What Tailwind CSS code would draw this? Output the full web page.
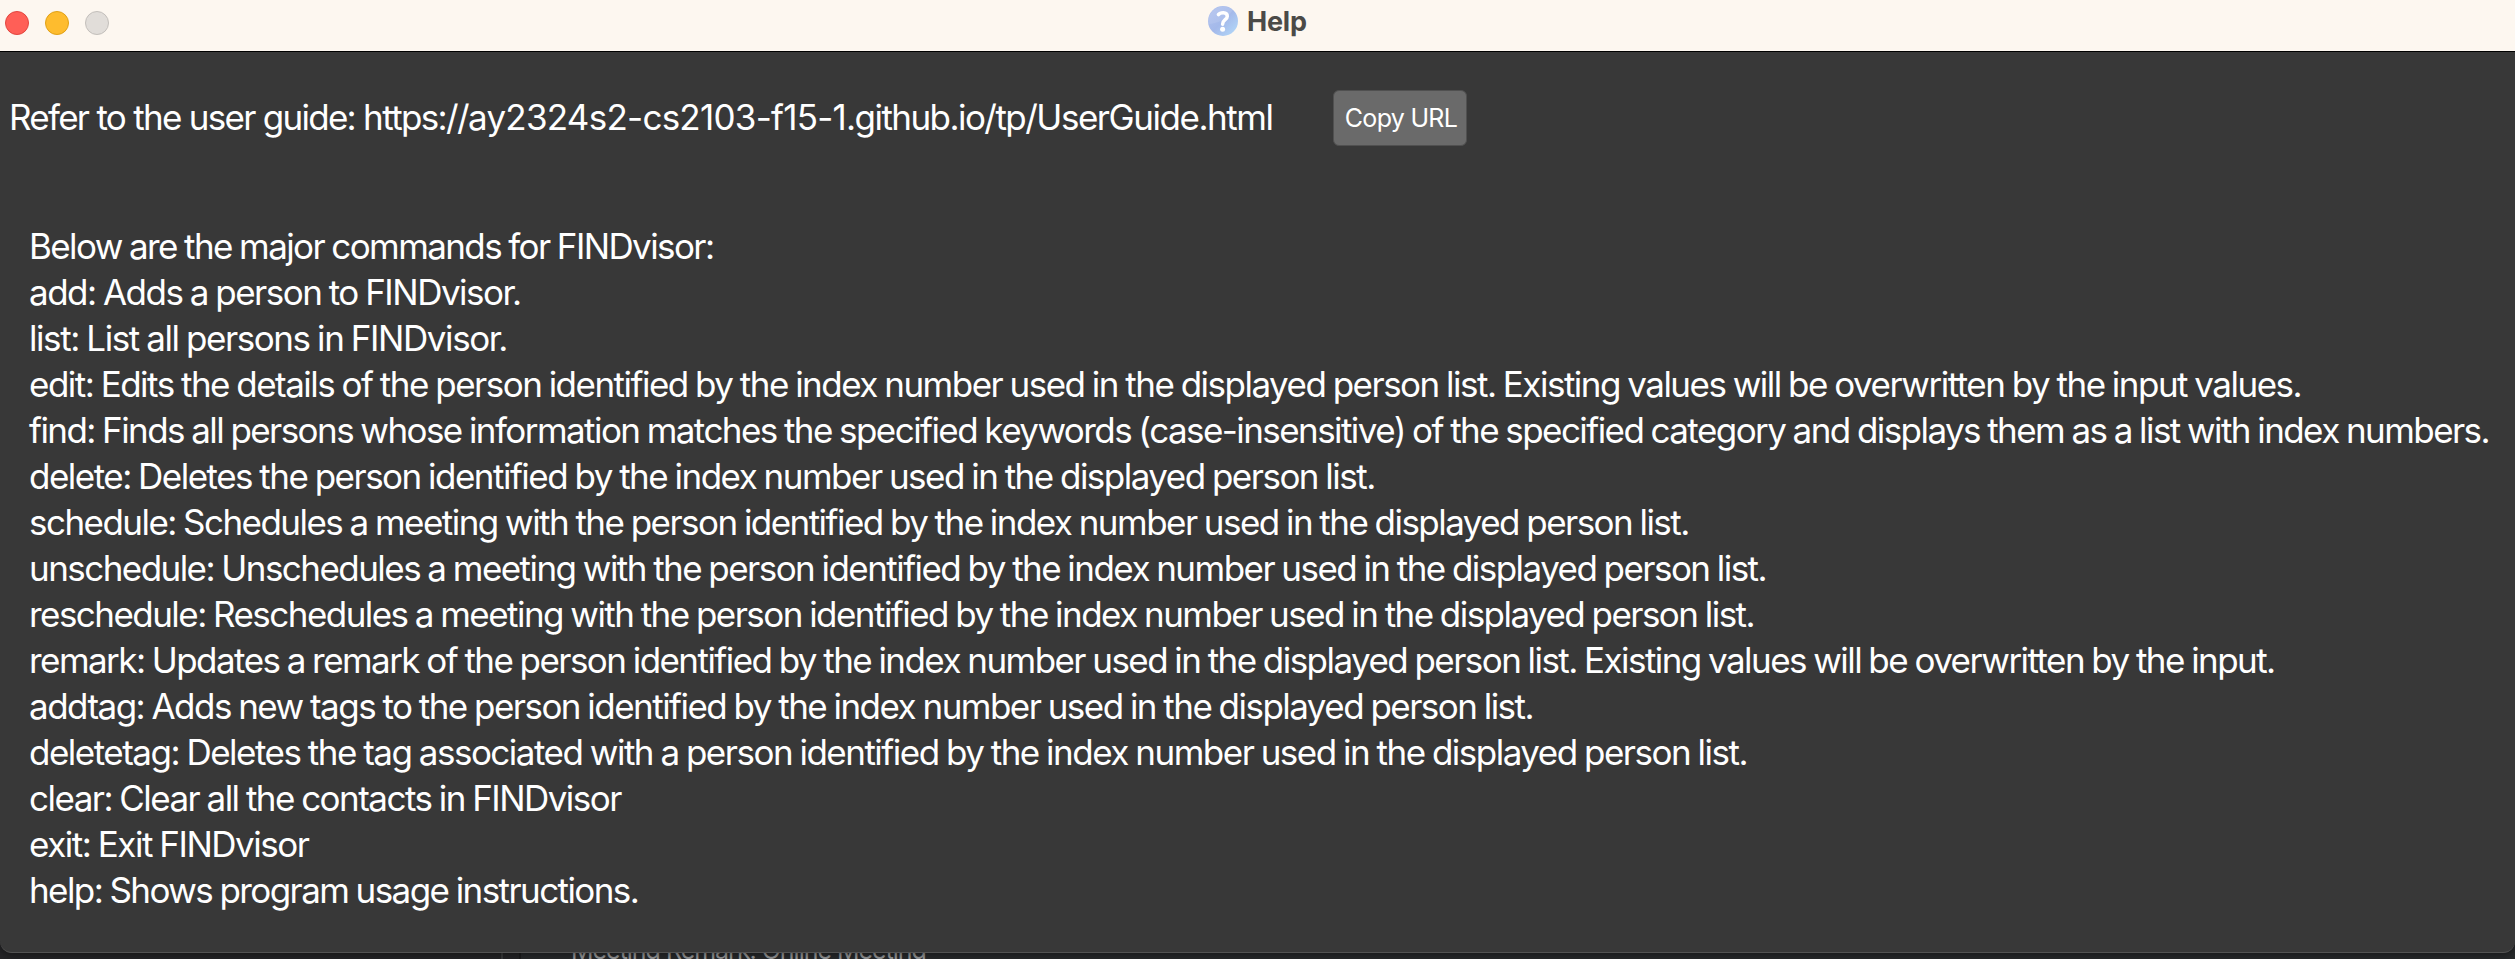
<!DOCTYPE html>
<html lang="en">
<head>
<meta charset="utf-8">
<title>Help</title>
<script src="https://cdn.jsdelivr.net/npm/@tailwindcss/browser@4"></script>
</head>
<body class="w-[2515px] h-[959px] overflow-hidden bg-[#27282a] font-['Inter',sans-serif] relative">
  <!-- Main window peeking out underneath the dialog -->
  <div class="absolute left-0 bottom-0 w-full h-[20px] overflow-hidden bg-[#252527]">
    <div class="absolute left-[501px] top-0 w-[2px] h-full bg-[#3a3b3c]"></div>
    <div class="absolute left-[519px] top-0 w-[2px] h-full bg-[#1c1c1d]"></div>
    <div class="absolute left-[521px] top-0 right-0 h-full bg-[#282a2c]"></div>
    <div class="absolute left-[571px] -top-[4px] text-[25px] leading-[30px] tracking-[-1.02px] whitespace-nowrap text-[#9a9b9c]">Meeting Remark: Online Meeting</div>
  </div>

  <!-- Help dialog -->
  <div class="relative flex flex-col w-full h-[953px] rounded-b-[12px] overflow-hidden bg-[#383838] border-b border-[#535353] shadow-[0_2px_8px_rgba(0,0,0,0.45)]">
    <header class="relative flex h-[52px] shrink-0 bg-[#fdf7f0] border-b border-black">
      <div class="flex gap-4 pl-[5px] pt-[11px]">
        <span class="size-6 rounded-full bg-[#ff5f57] border border-[#e2463f]"></span>
        <span class="size-6 rounded-full bg-[#febc2e] border border-[#e1a116]"></span>
        <span class="size-6 rounded-full bg-[#e1ddd9] border border-[#c3bfbb]"></span>
      </div>
      <div class="flex items-center h-[42px] ml-[1099px]">
        <svg class="size-[30px]" viewBox="0 0 30 30">
          <defs>
            <linearGradient id="orb" x1="0" y1="0" x2="1" y2="1">
              <stop offset="0" stop-color="#b3c3ee"/>
              <stop offset="0.5" stop-color="#a4b9ea"/>
              <stop offset="1" stop-color="#b4dcfa"/>
            </linearGradient>
          </defs>
          <circle cx="15" cy="15" r="15" fill="url(#orb)"/>
          <path d="M0.5 18C9 18 19 13 25 4A15 15 0 0 0 0.5 18Z" fill="#fff" fill-opacity="0.1"/>
          <path d="M10.4 8.6C12 6.4 19.3 5.2 19.3 10.2C19.3 13.9 14.6 13.6 14.6 18.2" fill="none" stroke="#fff" stroke-width="3.5" stroke-linecap="round" stroke-linejoin="round"/>
          <circle cx="14.6" cy="23.2" r="2.5" fill="#fff"/>
        </svg>
        <h1 class="ml-[9px] pt-[2px] text-[27px] leading-[42px] font-bold tracking-[-0.2px] text-[#4b4a47]">Help</h1>
      </div>
    </header>

    <main class="flex flex-col items-start text-white whitespace-nowrap">
      <div class="flex items-center mt-[38px] h-[56px] w-[1467px] justify-between pl-[9px]">
        <p class="-mt-[2px] text-[35px] leading-[46px]"><span class="tracking-[-1.72px]">Refer to the user guide: </span><span class="tracking-[-1.63px]">https://</span><span class="tracking-[-0.75px]">ay2324s2-cs2103-f15-1</span><span class="tracking-[-1.55px]">.github.io/tp/</span><span class="tracking-[-1.45px]">UserGuide.html</span></p>
        <button class="h-[56px] w-[134px] pt-px pl-[2px] rounded-[6px] bg-[#6a6a6a] border border-[#505050] text-[25px] tracking-[-0.7px]">Copy URL</button>
      </div>

      <div class="mt-[77px] pl-[29px] text-[35px] leading-[46px] [word-spacing:-1px]">
        <p class="tracking-[-1.6px]">Below are the major commands for FINDvisor:</p>
        <p class="tracking-[-1.5px]">add: Adds a person to FINDvisor.</p>
        <p class="tracking-[-1.42px]">list: List all persons in FINDvisor.</p>
        <p class="tracking-[-1.51px]">edit: Edits the details of the person identified by the index number used in the displayed person list. Existing values will be overwritten by the input values.</p>
        <p class="tracking-[-1.568px]">find: Finds all persons whose information matches the specified keywords (case-insensitive) of the specified category and displays them as a list with index numbers.</p>
        <p class="tracking-[-1.513px]">delete: Deletes the person identified by the index number used in the displayed person list.</p>
        <p class="tracking-[-1.541px]">schedule: Schedules a meeting with the person identified by the index number used in the displayed person list.</p>
        <p class="tracking-[-1.547px]">unschedule: Unschedules a meeting with the person identified by the index number used in the displayed person list.</p>
        <p class="tracking-[-1.541px]">reschedule: Reschedules a meeting with the person identified by the index number used in the displayed person list.</p>
        <p class="tracking-[-1.554px]">remark: Updates a remark of the person identified by the index number used in the displayed person list. Existing values will be overwritten by the input.</p>
        <p class="tracking-[-1.528px]">addtag: Adds new tags to the person identified by the index number used in the displayed person list.</p>
        <p class="tracking-[-1.499px]">deletetag: Deletes the tag associated with a person identified by the index number used in the displayed person list.</p>
        <p class="tracking-[-1.53px]">clear: Clear all the contacts in FINDvisor</p>
        <p class="tracking-[-1.474px]">exit: Exit FINDvisor</p>
        <p class="tracking-[-1.58px]">help: Shows program usage instructions.</p>
      </div>
    </main>
  </div>
</body>
</html>
